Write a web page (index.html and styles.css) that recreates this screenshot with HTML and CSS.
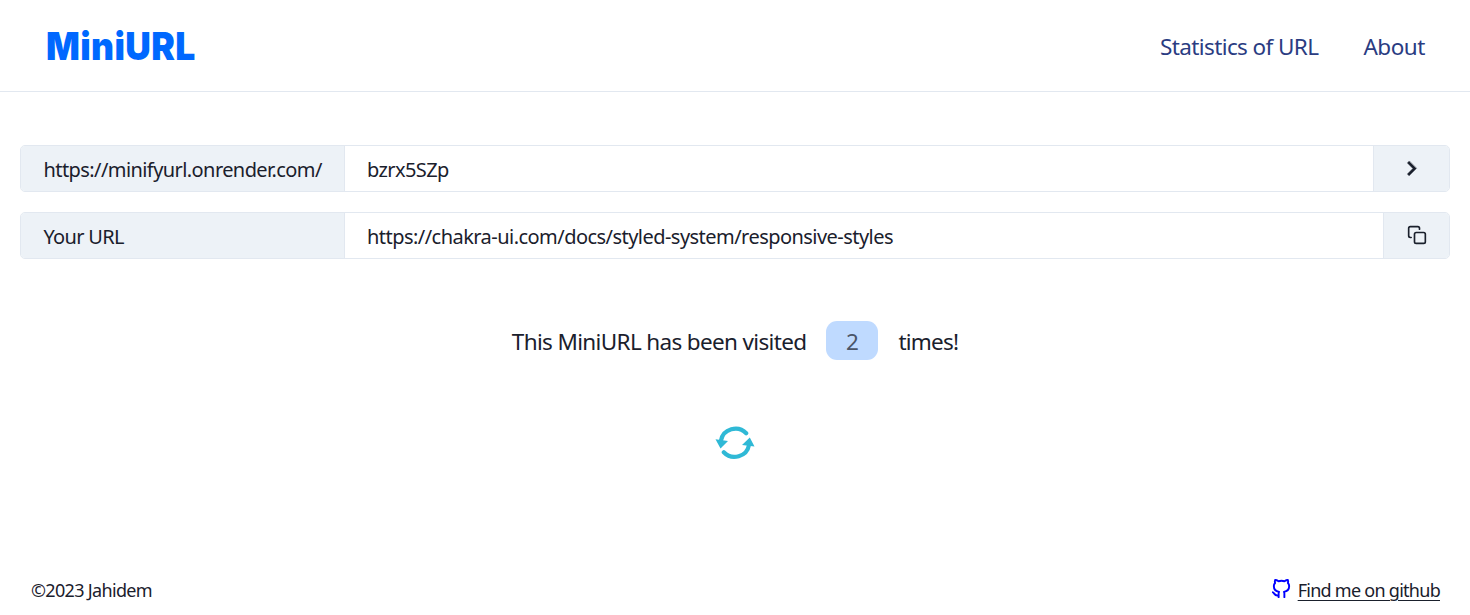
FILE: index.html
```html
<!DOCTYPE html>
<html lang="en">
<head>
<meta charset="utf-8">
<title>MiniURL</title>
<link rel="stylesheet" href="styles.css">
</head>
<body>
<header class="header">
  <a class="logo">MiniURL</a>
  <nav class="nav"><a class="stats">Statistics of URL</a><a class="about">About</a></nav>
</header>
<main class="main">
  <div class="group">
    <div class="addon"><span class="prefix">https://minifyurl.onrender.com/</span></div>
    <div class="field"><span class="code">bzrx5SZp</span></div>
    <button class="action action-go" aria-label="Go">
      <svg class="chevron" viewBox="0 0 24 24"><path d="M10 6L8.59 7.41 13.17 12l-4.58 4.59L10 18l6-6z"/></svg>
    </button>
  </div>
  <div class="group">
    <div class="addon"><span class="your">Your URL</span></div>
    <div class="field"><span class="long">https://chakra-ui.com/docs/styled-system/responsive-styles</span></div>
    <button class="action action-copy" aria-label="Copy">
      <svg class="copy" viewBox="0 0 24 24"><rect x="9" y="9" width="13" height="13" rx="2"/><path d="M5 15H4a2 2 0 0 1-2-2V4a2 2 0 0 1 2-2h9a2 2 0 0 1 2 2v1"/></svg>
    </button>
  </div>
  <p class="visits"><span class="visited">This MiniURL has been visited</span><span class="count">2</span><span class="times">times!</span></p>
  <button class="refresh" aria-label="Refresh">
    <svg viewBox="0 0 40 36"><path class="arc" d="M31.200 8.300A14.600 14.200 0 0 0 6 15.500M8.800 27.200A14.600 14.200 0 0 0 34 20"/><path class="tip" d="M.5 14.300L13 16 5.500 23.500zM27 20L34.800 12.500 39.500 21.500z"/></svg>
  </button>
</main>
<footer class="footer">
  <span class="copyright">©2023 Jahidem</span>
  <a class="github"><svg viewBox="0 0 24 24"><path d="M9 19c-4.300 1.400-4.300-2.500-6-3m12 5v-3.500c0-1 .1-1.400-.5-2 2.800-.3 5.500-1.400 5.500-6a4.600 4.600 0 0 0-1.300-3.200 4.200 4.200 0 0 0-.1-3.200s-1.100-.3-3.500 1.300a12.300 12.300 0 0 0-6.200 0C6.500 2.800 5.400 3.100 5.400 3.100a4.200 4.200 0 0 0-.1 3.200A4.600 4.600 0 0 0 4 9.500c0 4.600 2.700 5.700 5.500 6-.6.6-.6 1.200-.5 2V21"/></svg><span class="find">Find me on github</span></a>
</footer>
</body>
</html>
```
FILE: styles.css
```css
* { box-sizing: border-box; }
body {
  margin: 0;
  height: 615px;
  display: flex;
  flex-direction: column;
  background: #fff;
  color: #1a202c;
  font-family: "Noto Sans", sans-serif;
  font-size: 20px;
  white-space: nowrap;
  overflow: hidden;
}
button { padding: 0; border: 0; background: none; color: inherit; }
svg { display: block; fill: none; stroke: currentColor; stroke-linecap: round; stroke-linejoin: round; }
.header {
  height: 92px;
  flex: none;
  display: flex;
  align-items: center;
  justify-content: space-between;
  padding: 1px 45px 0 46px;
  border-bottom: 1px solid #e2e8f0;
}
.logo { margin-top: -1px; font: 900 39px/44px Inter, sans-serif; color: #0068ff; letter-spacing: .4px; transform: scaleX(.908); transform-origin: left; }
.nav { display: flex; gap: 45px; color: #2a3c82; font-size: 22.500px; }
.stats { letter-spacing: -.6px; }
.about { letter-spacing: -.45px; }
.main { flex: 1; display: flex; flex-direction: column; align-items: center; padding: 53px 20px 0; }
.group {
  width: 100%;
  height: 47px;
  flex: none;
  display: flex;
  margin-bottom: 20px;
  border: 1px solid #e2e8f0;
  border-radius: 5px;
  overflow: hidden;
}
.addon { width: 324px; padding: 2px 0 0 22.500px; background: #edf2f7; border-right: 1px solid #e2e8f0; line-height: 43px; }
.field { flex: 1; padding: 2px 0 0 22px; line-height: 43px; }
.prefix { letter-spacing: -.58px; }
.code { letter-spacing: -.6px; }
.your { letter-spacing: -.7px; }
.long { letter-spacing: -.54px; }
.action { display: flex; align-items: center; justify-content: center; padding-bottom: 1px; background: #edf2f7; border-left: 1px solid #e2e8f0; }
.action-go { width: 76px; }
.action-copy { width: 66px; }
.chevron { width: 29px; height: 29px; fill: currentColor; stroke: currentColor; stroke-width: .4; }
.copy { width: 20px; height: 20px; stroke-width: 2; }
.visits { display: flex; align-items: center; gap: 20px; height: 39px; margin: 42px 0 0; font-size: 22.500px; }
.count { width: 52px; height: 39px; padding-top: 2px; border-radius: 11px; background: #bfdaff; color: #4a5568; line-height: 38px; text-align: center; }
.visited, .times { padding-top: 2px; }
.visited { letter-spacing: -.65px; }
.times { letter-spacing: -.8px; }
.refresh { margin-top: 65px; width: 40px; height: 36px; color: #2fb9d6; }
.arc { stroke-width: 4.200; }
.tip { fill: currentColor; stroke: none; }
.footer { height: 50px; flex: none; display: flex; justify-content: space-between; align-items: center; padding: 0 30px 0 31px; font-size: 18px; }
.copyright { letter-spacing: -.67px; }
.github { display: flex; align-items: center; gap: 5px; }
.find { letter-spacing: -.73px; text-decoration: underline; text-decoration-thickness: 1px; text-underline-offset: 3px; }
.github svg { width: 23px; height: 23px; margin-bottom: 3px; color: #00f; stroke-width: 2; }
```
